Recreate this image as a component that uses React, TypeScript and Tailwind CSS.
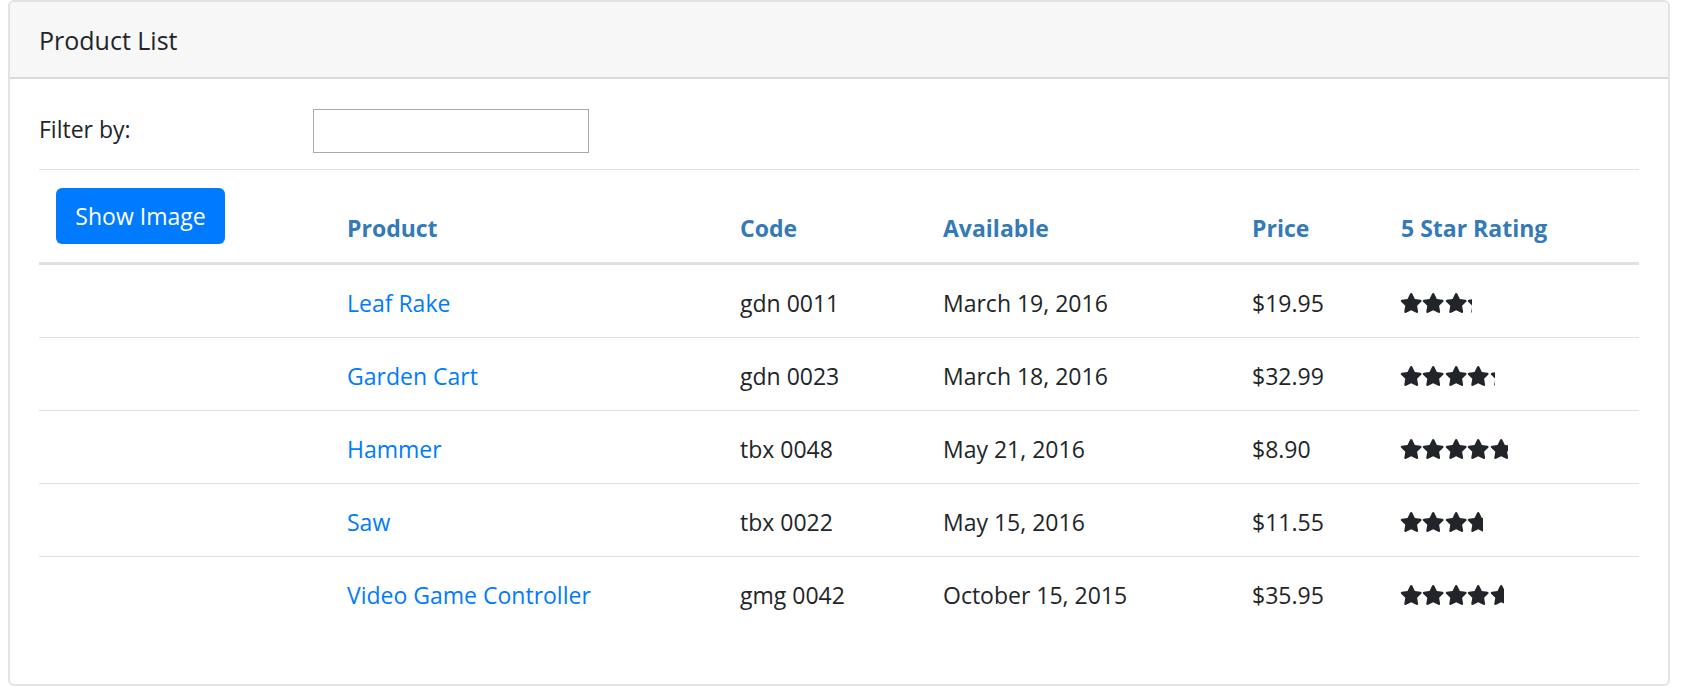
import React from "react";

type Product = {
  name: string;
  code: string;
  date: string;
  price: string;
  rating: number;
};

const products: Product[] = [
  { name: "Leaf Rake", code: "gdn 0011", date: "March 19, 2016", price: "$19.95", rating: 3.2 },
  { name: "Garden Cart", code: "gdn 0023", date: "March 18, 2016", price: "$32.99", rating: 4.2 },
  { name: "Hammer", code: "tbx 0048", date: "May 21, 2016", price: "$8.90", rating: 4.8 },
  { name: "Saw", code: "tbx 0022", date: "May 15, 2016", price: "$11.55", rating: 3.7 },
  { name: "Video Game Controller", code: "gmg 0042", date: "October 15, 2015", price: "$35.95", rating: 4.6 },
];

const FONT = "font-['Open_Sans','Noto_Sans',sans-serif]";

function Star() {
  return (
    <svg viewBox="0 0 576 512" className="w-[22.4px] h-[20px] shrink-0 fill-[#212529]">
      <path d="M259.3 17.8L194 150.2 47.9 171.5c-26.2 3.8-36.7 36.1-17.7 54.6l105.7 103-25 145.5c-4.5 26.3 23.2 46 46.4 33.7L288 439.6l130.7 68.7c23.2 12.2 50.9-7.4 46.4-33.7l-25-145.5 105.7-103c19-18.5 8.5-50.8-17.7-54.6L382 150.2 316.7 17.8c-11.7-23.6-45.6-23.9-57.4 0z" />
    </svg>
  );
}

function Stars({ rating }: { rating: number }) {
  return (
    <div className="overflow-hidden" style={{ width: `${(rating * 112.5) / 5}px` }}>
      <div className="flex w-[112.5px]">
        <Star />
        <Star />
        <Star />
        <Star />
        <Star />
      </div>
    </div>
  );
}

const cols = "grid grid-cols-[290px_393px_203px_309px_149px_256px]";

export default function App() {
  return (
    <div className={`${FONT} bg-white min-h-[697px] pl-[8px] text-[#212529]`}>
      <div className="w-[1662px] h-[686px] border-2 border-[#e3e3e3] rounded-[6px] overflow-hidden flex flex-col">
        <div className="h-[77px] bg-[#f7f7f7] border-b-2 border-[#dadada] pl-[29px] flex items-center text-[25px] pt-[2px]">
          Product List
        </div>
        <div className="pl-[29px] pr-[29px] pt-[30px]">
          <div className="flex items-start">
            <div className="w-[274px] h-[36px] pt-[2px] leading-[36px] text-[23px]">Filter by:</div>
            <input
              type="text"
              className="w-[276px] h-[44px] border border-[#a9a9a9] outline-none px-2 text-[23px]"
            />
          </div>
          <div className="mt-[16px] h-px bg-[#e2e2e2]" />
          <div className={`${cols} h-[95px] border-b-[3px] border-[#dee2e6]`}>
            <div className="pl-[17px] pt-[18px]">
              <button className="w-[169px] h-[56px] bg-[#007bff] rounded-[6px] text-white text-[23px] leading-[36px]">
                Show Image
              </button>
            </div>
            {["Product", "Code", "Available", "Price", "5 Star Rating"].map((h) => (
              <div key={h} className="pl-[18px] flex items-end pb-[16px]">
                <span className="text-[23px] leading-[36px] font-bold text-[#337ab7]">{h}</span>
              </div>
            ))}
          </div>
          {products.map((p, i) => (
            <div
              key={p.name}
              className={`${cols} ${i === 0 ? "h-[72px]" : "h-[73px] border-t border-[#dee2e6]"} text-[23px] leading-[36px]`}
            >
              <div />
              <div className="pl-[18px] pt-[20px]">
                <a className="text-[#007bff]" href="#">
                  {p.name}
                </a>
              </div>
              <div className="pl-[18px] pt-[20px]">{p.code}</div>
              <div className="pl-[18px] pt-[20px]">{p.date}</div>
              <div className="pl-[18px] pt-[20px]">{p.price}</div>
              <div className="pl-[17px] pt-[28px]">
                <Stars rating={p.rating} />
              </div>
            </div>
          ))}
        </div>
      </div>
    </div>
  );
}
